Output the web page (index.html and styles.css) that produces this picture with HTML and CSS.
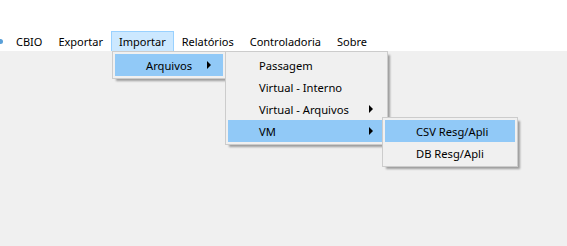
FILE: index.html
```html
<!DOCTYPE html>
<html>
<head>
<meta charset="utf-8">
<link rel="stylesheet" href="styles.css">
</head>
<body>
<div class="top">
  <nav class="menubar">
    <span class="dot"></span>
    <span class="mitem">CBIO</span>
    <span class="mitem">Exportar</span>
    <span class="mitem active">Importar</span>
    <span class="mitem">Relatórios</span>
    <span class="mitem">Controladoria</span>
    <span class="mitem">Sobre</span>
  </nav>
</div>
<div class="menu m1">
  <div class="row hl"><span class="label">Arquivos</span><span class="arrow"></span></div>
</div>
<div class="menu m2">
  <div class="row"><span class="label">Passagem</span></div>
  <div class="row"><span class="label">Virtual - Interno</span></div>
  <div class="row"><span class="label">Virtual - Arquivos</span><span class="arrow"></span></div>
  <div class="row hl"><span class="label">VM</span><span class="arrow"></span></div>
</div>
<div class="menu m3">
  <div class="row hl"><span class="label">CSV Resg/Apli</span></div>
  <div class="row"><span class="label">DB Resg/Apli</span></div>
</div>
</body>
</html>
```
FILE: styles.css
```css
html, body {
  margin: 0;
  padding: 0;
}
body {
  background: #f0f0f0;
  width: 567px;
  height: 246px;
  overflow: hidden;
  position: relative;
  font-family: "Noto Sans", "Open Sans", sans-serif;
  font-size: 11.2px;
  color: #000;
}
.top {
  background: #fff;
  height: 51px;
  display: flex;
  align-items: flex-end;
}
.menubar {
  display: flex;
  align-items: stretch;
  height: 20px;
  padding-left: 1px;
  font-size: 11px;
}
.dot {
  width: 3px;
  height: 5px;
  margin-top: 8px;
  margin-left: -1px;
  margin-right: 5px;
  background: #5aa0d8;
  border-radius: 0 3px 3px 0;
}
.mitem {
  display: flex;
  align-items: center;
  padding: 0 7px 1px 7px;
  border: 1px solid transparent;
  border-bottom: 0;
  line-height: 1;
}
.mitem.active {
  background: #cce8ff;
  border-color: #99d1ff;
}
.menu {
  position: absolute;
  background: #f0f0f0;
  border: 1px solid #cccccc;
  padding: 2px;
  box-shadow: 3px 3px 2px -1px rgba(0, 0, 0, 0.35);
}
.m1 {
  left: 112px;
  top: 51px;
  width: 108px;
}
.m2 {
  left: 225px;
  top: 51px;
  width: 157px;
}
.m3 {
  left: 382px;
  top: 117px;
  width: 130px;
}
.row {
  height: 22px;
  display: flex;
  align-items: center;
  padding-left: 31px;
  padding-right: 12px;
}
.row.hl {
  background: #91c9f7;
}
.label {
  flex: 1;
  white-space: nowrap;
}
.arrow {
  width: 0;
  height: 0;
  border-top: 4px solid transparent;
  border-bottom: 4px solid transparent;
  border-left: 4px solid #000;
}
```
